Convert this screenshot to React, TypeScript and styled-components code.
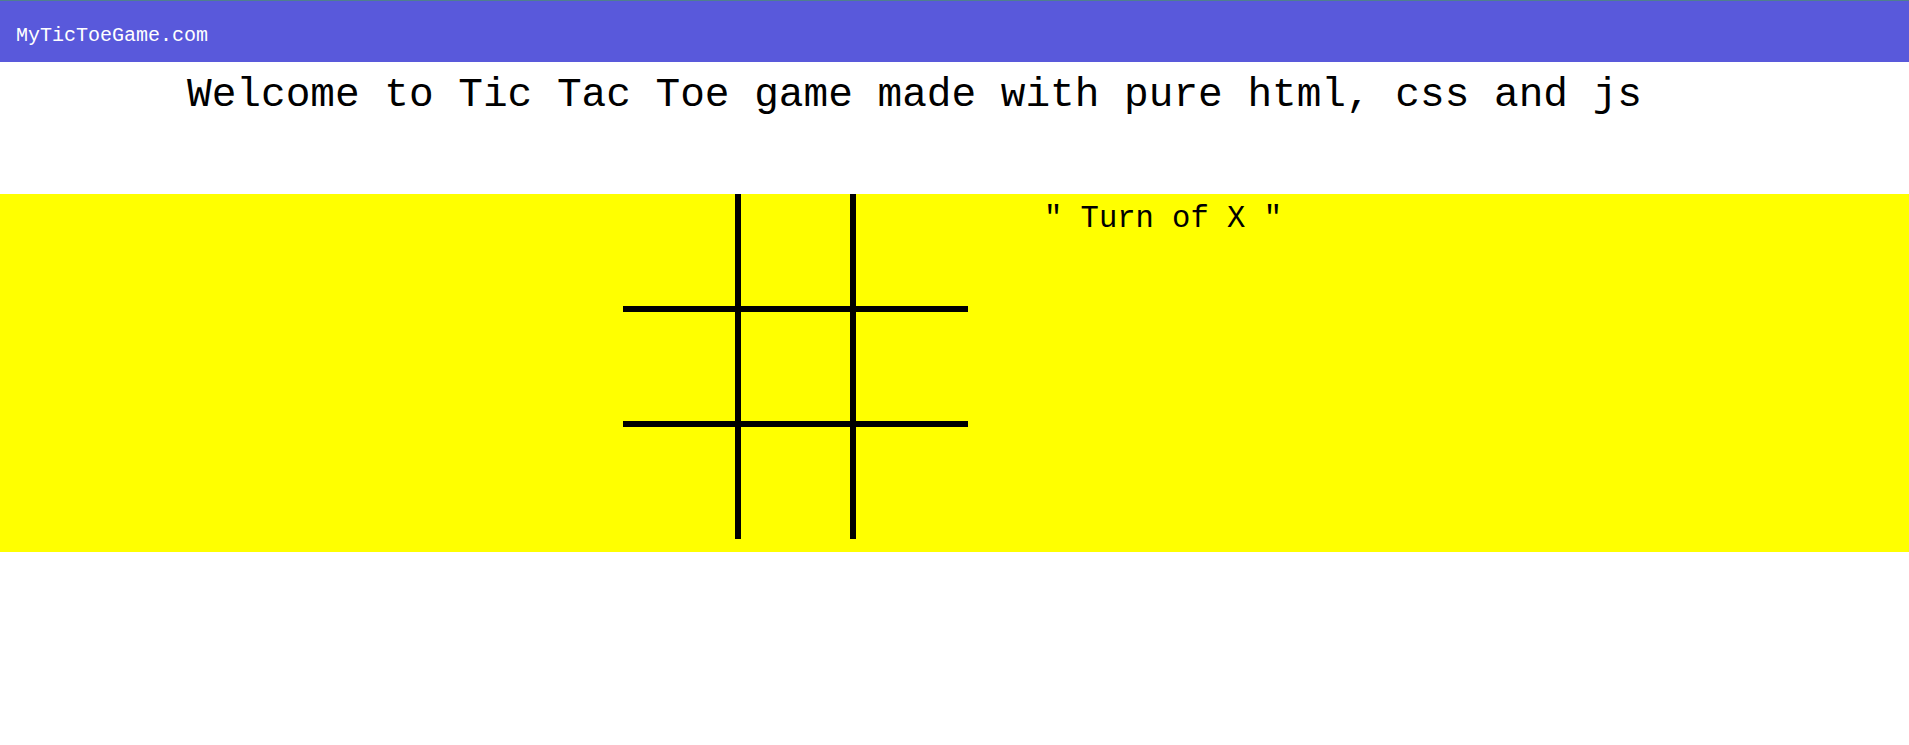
import React from "react";
import styled, { createGlobalStyle } from "styled-components";

const Global = createGlobalStyle`
  html, body { margin: 0; padding: 0; background: #ffffff; }
  body { font-family: "Liberation Mono", "DejaVu Sans Mono", monospace; }
`;

const Nav = styled.nav`
  height: 61px;
  border-top: 1px solid #4f7f8f;
  background: #5959db;
  box-sizing: content-box;
  padding: 0 0 0 16px;
  display: flex;
  align-items: flex-start;
`;

const Brand = styled.span`
  color: #ffffff;
  font-size: 20px;
  line-height: 20px;
  margin-top: 25px;
`;

const Title = styled.h1`
  margin: 9px 0 75px 0;
  padding-left: 187px;
  font-weight: normal;
  font-size: 41.1px;
  line-height: 48px;
  color: #000;
  white-space: nowrap;
`;

const Stage = styled.section`
  background: #ffff00;
  height: 358px;
  display: flex;
  align-items: flex-start;
  padding-left: 623px;
  gap: 76px;
`;

const Board = styled.div`
  display: grid;
  grid-template-columns: repeat(3, 115px);
  grid-template-rows: repeat(3, 115px);
`;

const Cell = styled.div<{ $r: number; $c: number }>`
  box-sizing: border-box;
  border-style: solid;
  border-color: #000;
  border-width: ${(p) => (p.$r > 0 ? 3 : 0)}px ${(p) => (p.$c < 2 ? 3 : 0)}px
    ${(p) => (p.$r < 2 ? 3 : 0)}px ${(p) => (p.$c > 0 ? 3 : 0)}px;
`;

const Turn = styled.div`
  margin-top: 7px;
  font-size: 30.5px;
  line-height: 36px;
  color: #000;
  white-space: pre;
`;

export default function App() {
  const cells = [];
  for (let r = 0; r < 3; r++) {
    for (let c = 0; c < 3; c++) {
      cells.push(<Cell key={`${r}-${c}`} $r={r} $c={c} />);
    }
  }
  return (
    <>
      <Global />
      <Nav>
        <Brand>MyTicToeGame.com</Brand>
      </Nav>
      <Title>Welcome to Tic Tac Toe game made with pure html, css and js</Title>
      <Stage>
        <Board>{cells}</Board>
        <Turn>{"″ Turn of X ″"}</Turn>
      </Stage>
    </>
  );
}
